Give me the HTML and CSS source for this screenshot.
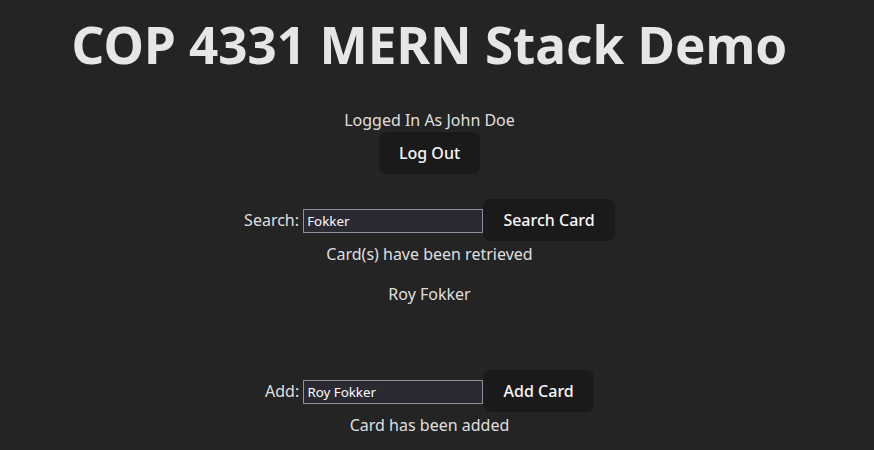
FILE: index.html
```html
<!DOCTYPE html>
<html lang="en">
<head>
<meta charset="utf-8">
<title>COP 4331 MERN Stack Demo</title>
<link rel="stylesheet" href="styles.css">
</head>
<body>
<div class="app">
  <h1 class="title">COP 4331 MERN Stack Demo</h1>
  <div class="logged">
    <div class="user">Logged In As John Doe</div>
    <button class="btn">Log Out</button>
  </div>
  <div class="card-ui">
    <div class="row"><span class="label">Search:</span> <input class="field" type="text" value="Fokker"><button class="btn">Search Card</button></div>
    <div class="msg">Card(s) have been retrieved</div>
    <p class="result">Roy Fokker</p>
    <div class="row add"><span class="label">Add:</span> <input class="field" type="text" value="Roy Fokker"><button class="btn">Add Card</button></div>
    <div class="msg">Card has been added</div>
  </div>
</div>
</body>
</html>
```
FILE: styles.css
```css
html, body {
  margin: 0;
  padding: 0;
  background: #242424;
  overflow: hidden;
}
body {
  color: rgba(255, 255, 255, 0.87);
  font-family: "Noto Sans", "Open Sans", sans-serif;
  font-size: 16px;
  line-height: 24px;
}
.app {
  width: 859px;
  text-align: center;
}
.title {
  margin: 0;
  padding-top: 16px;
  font-size: 51.2px;
  line-height: 1.1;
  font-weight: 700;
  color: #e6e6e6;
}
.logged {
  margin-top: 36px;
}
.user {
  height: 24px;
}
.btn {
  font-family: "Noto Sans", "Open Sans", sans-serif;
  font-size: 16px;
  font-weight: 500;
  line-height: 22px;
  color: #f6f6f6;
  background: #1a1a1a;
  border: 1px solid transparent;
  border-radius: 8px;
  padding: 9px 19.2px;
  cursor: pointer;
  vertical-align: middle;
}
.card-ui {
  margin-top: 25px;
}
.row {
  height: 43px;
}
.label {
  vertical-align: middle;
}
.field {
  box-sizing: border-box;
  width: 180px;
  height: 24px;
  margin: 2px 0 0;
  padding: 1px 3px;
  font-family: "Noto Sans", "Open Sans", sans-serif;
  font-size: 13.33px;
  color: #fbfbfe;
  background: #2b2a33;
  border: 1px solid #8f8f9d;
  border-radius: 0;
  vertical-align: middle;
  outline: none;
}
.msg {
  height: 24px;
}
.result {
  margin: 16px 0 0;
  height: 24px;
}
.add {
  margin-top: 64px;
}
```
